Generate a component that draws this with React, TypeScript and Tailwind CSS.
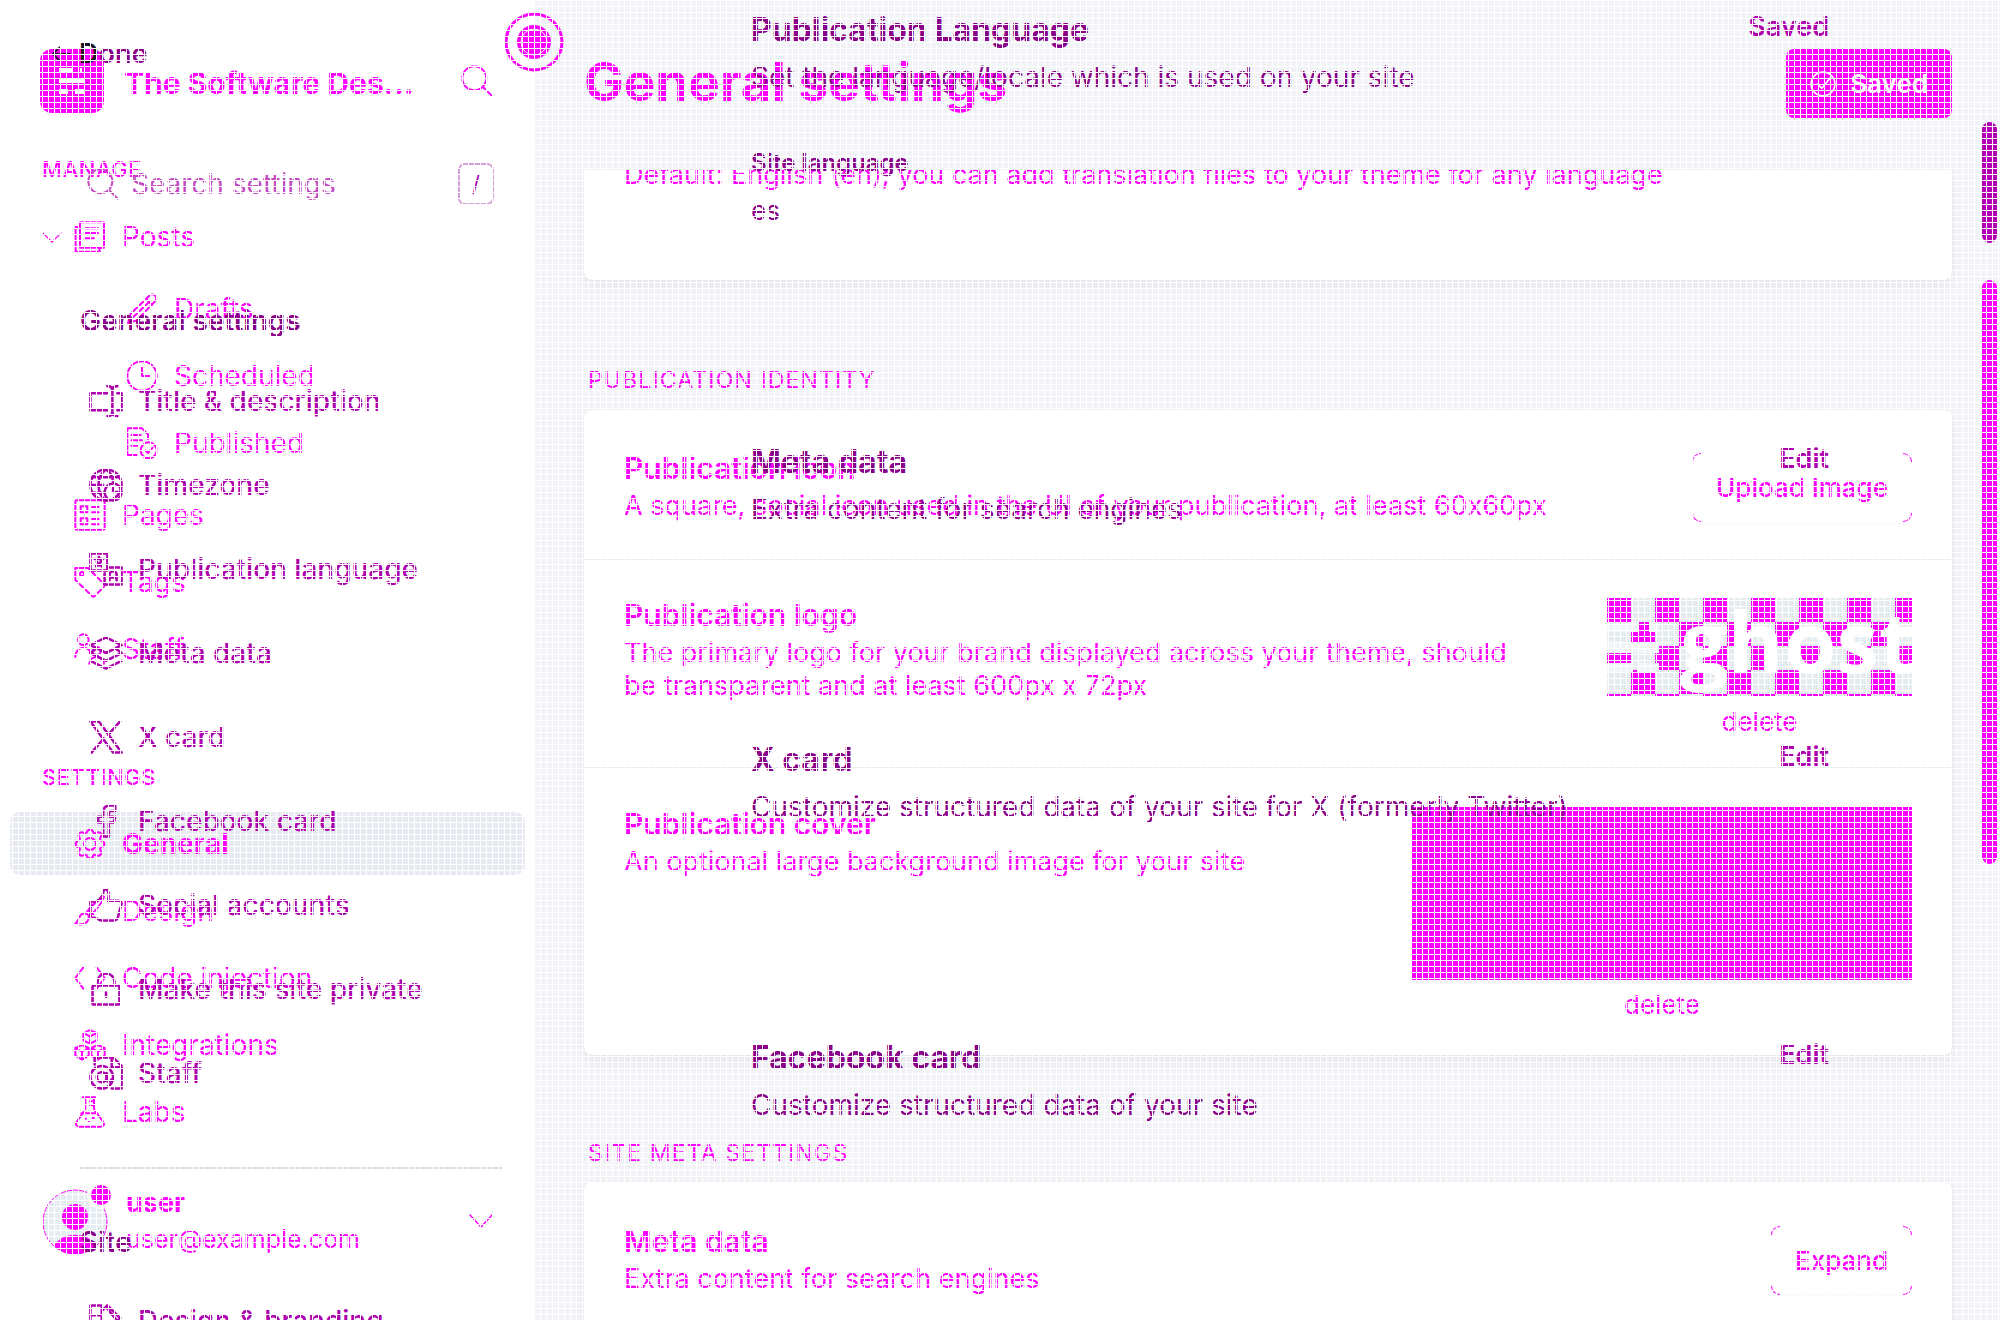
import type { ReactNode } from "react";

const family = "font-['Inter','Liberation_Sans',sans-serif] [font-feature-settings:'calt'_0]";

function Icon({ children, size = "size-8", width = 1.5 }: { children: ReactNode; size?: string; width?: number }) {
  return (
    <svg
      viewBox="0 0 24 24"
      fill="none"
      stroke="currentColor"
      strokeWidth={width}
      strokeLinecap="round"
      strokeLinejoin="round"
      aria-hidden="true"
      className={`${size} shrink-0`}
    >
      {children}
    </svg>
  );
}

const magnifier = (
  <>
    <circle cx="10" cy="10" r="9" />
    <path d="M16.5 16.5 L23 23" />
  </>
);
const posts = (
  <>
    <path d="M4.5 1h18v19h-18z" />
    <path d="M4.5 4.5H1.2V23h18V20M8 5.5h10M8 9h10M8 13h7" />
  </>
);
const pencil = <path d="M1.500 22.500l2-7L17.500 2a2.800 2.800 0 0 1 4.300 4.200L8 20.500zM15 4.500l4.500 4.500M5.500 18L17.500 6.500" />;
const clock = (
  <>
    <circle cx="12" cy="12" r="11" />
    <path d="M12 5v7h6" />
  </>
);
const published = (
  <>
    <path d="M8 21H1V1h11l4.500 4.500V9M4 6h7M4 10h8M4 14h5" />
    <circle cx="17" cy="17.500" r="6" />
    <path d="M14.500 17.500l2 2 3.500-4" />
  </>
);
const pages = (
  <>
    <rect x="1" y="1" width="22" height="22" rx="1" />
    <path d="M5 5.500h5V10H5zM13.500 6h5M13.500 10h5M5 14.500h5V19H5zM13.500 15h5M13.500 19h5" />
  </>
);
const tag = (
  <>
    <path d="M1 1.500h9.500L22.500 13.500a1.500 1.500 0 0 1 0 2L15.500 22.500a1.500 1.500 0 0 1-2 0L1 10.500z" />
    <circle cx="6" cy="6" r="1.500" />
  </>
);
const staff = (
  <>
    <circle cx="7" cy="5" r="4" />
    <path d="M1 18c0-4 2.500-7 6-7s5 2 5.500 4" />
    <circle cx="17" cy="13.500" r="3" />
    <path d="M11.500 23c0-3 2.500-5 5.500-5s5.500 2 5.500 5" />
  </>
);
const gear = (
  <>
    <path d="M9.500 3.500C10 .5 14 .5 14.500 3.500c1 .8 1.500.5 2.500 0 2.500-1 4.500 1.500 3 3.500-.8 1.300-.5 2 .5 2.500 3 .8 3 4.200 0 5-1 .5-1.300 1.200-.5 2.500 1.500 2-.5 4.500-3 3.500-1-.5-1.500-.8-2.500 0-.5 3-4.500 3-5 0-1-.8-1.500-.5-2.500 0-2.500 1-4.500-1.500-3-3.500.8-1.300.5-2-.5-2.500-3-.8-3-4.200 0-5 1-.5 1.300-1.200.5-2.500-1.500-2 .5-4.500 3-3.500 1 .5 1.500.8 2.500 0z" />
    <circle cx="12" cy="12" r="4.500" />
  </>
);
const brush = <path d="M22.500 1.500c-5 2.500-10 7-13.500 12l2.500 2.500C16 12 20.500 7 22.500 1.500zM8.500 14c-5-.5-4 4.500-7.500 7.500 4.500 1.500 10 0 10-5M11 11l3.500 3.500" />;
const code = <path d="M7 4L1 12l6 8M17 4l6 8-6 8" />;
const cubes = (
  <path d="M12 .8l5 2.200v5.500l-5 2.500-5-2.500V3zM7 3l5 2.500L17 3M12 5.500V11M6 12l5 2.200V20l-5 3-5-3v-5.800zM1 14.200L6 17l5-2.800M6 17v6M18 12l5 2.200V20l-5 3-5-3v-5.800zM13 14.200l5 2.800 5-2.800M18 17v6" />
);
const flask = <path d="M6.500 1h9.500M8.500 1v9L2 19.500C.8 21.500 1.800 23 4 23h16c2.200 0 3.200-1.500 2-3.500L15 10V1M12 4h3M12 7h3M5.500 13h12M8 17h1M14 16.500h1M11 19.500h1" />;

const textField = <path d="M13 6.500H1v12h12M20 6.500h3v12h-3M13 1.500c2.500 0 3.500 1 3.500 3v15c0 2-1 3-3.500 3M20 1.500c-2.500 0-3.500 1-3.500 3M20 22.500c-2.500 0-3.500-1-3.500-3" />;
const globe = (
  <>
    <circle cx="12" cy="12" r="11" />
    <path d="M12 23c-7-5-7-17 0-22 3 2 4.500 5 5 8.500M2.500 6.500h19M1 12h9M2.500 17.500h7" />
    <circle cx="17" cy="17" r="6" />
    <path d="M17 14v3h3" />
  </>
);
const language = (
  <>
    <rect x="1" y="1" width="12" height="12" />
    <path d="M4 5h6M7 3.500V5M5 10c2.500-1 3.500-2.500 4-5M5.500 7c1 1.500 2 2.500 3.500 3" />
    <path d="M13 11h10v12H11v-8M14.500 20v-4a2.500 2.500 0 0 1 5 0v4M14.500 18h5" />
  </>
);
const layers = <path d="M12 1l11 5.500L12 12 1 6.500zM1 12l11 5.500L23 12M1 17.500L12 23l11-5.500M5 9l-4 3M19 9l4 3" />;
const xLogo = <path d="M1 1h6l16 22h-6zM22 1L13.500 10.500M1.800 23l8.700-10" />;
const facebook = <path d="M18.500 1H15c-3.500 0-5 2-5 5v3H6.500v4H10v10h4V13h3.500l1-4H14V6.500c0-1 .5-1.500 1.500-1.500h3z" />;
const thumb = <path d="M1 21V9.500h4c3-1 5-4 5.500-8.500 3-.5 4 2 3 8h7.500c2 0 2.500 2 1.500 3.500l-2 8c-.5 2-1.500 2.500-3.500 2.500H9c-2 0-3-2-5-2z" />;
const lock = (
  <>
    <rect x="2.500" y="9.500" width="19" height="13.500" rx="1" />
    <path d="M6 9.500V7a6 6 0 0 1 12 0v2.500M12 14.500v3" />
  </>
);
const atFile = (
  <>
    <path d="M4 6V1h13l6 6v16h-7M16 1v7h7" />
    <circle cx="9" cy="15" r="8" />
    <circle cx="9" cy="15" r="3.500" />
    <path d="M12.500 12v4.500c0 2 3 2 3.500 0" />
  </>
);
const swatch = <path d="M1 1h8v22H1zM1 8h8M1 15h8M9 5l4-4 9 9L9 23M23 15v8H9M12 2l8 10" />;

type Item = { label: string; icon: ReactNode; open?: boolean };

const manageTop: Item[] = [{ label: "Posts", icon: posts, open: true }];
const postViews: Item[] = [
  { label: "Drafts", icon: pencil },
  { label: "Scheduled", icon: clock },
  { label: "Published", icon: published },
];
const manageRest: Item[] = [
  { label: "Pages", icon: pages },
  { label: "Tags", icon: tag },
  { label: "Staff", icon: staff },
];
const settingsItems: Item[] = [
  { label: "Design", icon: brush },
  { label: "Code injection", icon: code },
  { label: "Integrations", icon: cubes },
  { label: "Labs", icon: flask },
];
const generalItems: Item[] = [
  { label: "Title & description", icon: textField },
  { label: "Timezone", icon: globe },
  { label: "Publication language", icon: language },
  { label: "Meta data", icon: layers },
  { label: "X card", icon: xLogo },
  { label: "Facebook card", icon: facebook },
  { label: "Social accounts", icon: thumb },
  { label: "Make this site private", icon: lock },
  { label: "Staff", icon: atFile },
];

function NavLink({ item }: { item: Item }) {
  return (
    <a href="#nav" className="flex h-[67px] items-center pl-[42px]">
      <span className="flex w-8 items-center">
        {item.open && (
          <Icon size="size-5" width={1.5}>
            <path d="M1 7l11 11L23 7" />
          </Icon>
        )}
      </span>
      <Icon>{item.icon}</Icon>
      <span className="ml-4">{item.label}</span>
    </a>
  );
}

function AdminSidebar() {
  return (
    <aside className="relative h-[1320px] w-[535px] shrink-0 bg-white text-[28px] leading-8">
      <div className="flex h-[162px] items-start pr-[42px] pl-10 pt-[49px]">
        <svg viewBox="0 0 64 64" className="size-16 shrink-0" aria-label="Site icon" role="img">
          <rect width="64" height="64" rx="12" fill="currentColor" />
          <path d="M19 19h14v4H19zM40 19h2v4h-2zM19 29h25v5H19zM19 40h9v5h-9zM35 40h9v5h-9z" fill="#fff" />
        </svg>
        <span className="mt-[18px] ml-5 flex-1 truncate text-[30px] font-bold">The Software Des...</span>
        <button aria-label="Search" className="mt-4">
          <Icon>{magnifier}</Icon>
        </button>
      </div>
      <h2 className="-mt-2 mb-[19px] pl-[42px] text-[22px] leading-[30px] font-medium tracking-wide">MANAGE</h2>
      <nav aria-label="Manage">
        {manageTop.map((i) => (
          <NavLink key={i.label} item={i} />
        ))}
        <div className="py-[5px]">
          {postViews.map((i) => (
            <a key={i.label} href="#view" className="flex h-[67px] items-center pl-[126px]">
              <Icon>{i.icon}</Icon>
              <span className="ml-4">{i.label}</span>
            </a>
          ))}
        </div>
        {manageRest.map((i) => (
          <NavLink key={i.label} item={i} />
        ))}
      </nav>
      <h2 className="mt-20 mb-5 pl-[42px] text-[22px] leading-[30px] font-medium tracking-wide">SETTINGS</h2>
      <nav aria-label="Settings">
        <a href="#general" aria-current="page" className="mx-[10px] mb-[2px] flex h-[63px] items-center rounded-[10px] bg-[#e8eaf1] pl-16 font-bold">
          <Icon>{gear}</Icon>
          <span className="ml-4">General</span>
        </a>
        {settingsItems.map((i) => (
          <NavLink key={i.label} item={i} />
        ))}
      </nav>
      <button className="mt-10 flex w-full items-center pr-[42px] pl-[42px] text-left">
        <svg viewBox="0 -4 70 72" className="h-[72px] w-[70px] shrink-0" aria-hidden="true">
          <circle cx="33" cy="33" r="32" fill="#e6edf2" stroke="currentColor" strokeWidth="1" />
          <circle cx="33" cy="28" r="13" fill="currentColor" />
          <path d="M12 57c8-15 34-15 42 0-12 11-30 11-42 0z" fill="currentColor" />
          <circle cx="59" cy="6" r="14" fill="#fff" />
          <circle cx="59" cy="6" r="10" fill="currentColor" />
        </svg>
        <span className="ml-[14px] flex flex-1 flex-col">
          <b className="text-[27px] leading-9">user</b>
          <span className="text-[25px] leading-9">user@example.com</span>
        </span>
        <Icon size="size-6">
          <path d="M1 6l11 12L23 6" />
        </Icon>
      </button>
      <button aria-label="Status" className="absolute top-[12px] -right-[29px] z-10">
        <svg viewBox="0 0 60 60" className="size-[60px]">
          <circle cx="30" cy="30" r="28" fill="none" stroke="currentColor" strokeWidth="3" />
          <circle cx="30" cy="30" r="17" fill="currentColor" />
          <circle cx="30" cy="30" r="13" fill="none" stroke="#fff" />
        </svg>
      </button>
    </aside>
  );
}

function OutlineButton({ children }: { children: string }) {
  return (
    <button className="relative h-[69px] rounded-[9px] px-6 text-[26px] font-medium whitespace-nowrap shadow-[0_2px_3px_rgba(0,0,0,0.03)]">
      <span className="absolute top-0 left-0 size-[9px] rounded-tl-[9px] border-t border-l border-current" />
      <span className="absolute top-0 right-0 size-[9px] rounded-tr-[9px] border-t border-r border-current" />
      <span className="absolute bottom-0 left-0 size-[9px] rounded-bl-[9px] border-b border-l border-current" />
      <span className="absolute right-0 bottom-0 size-[9px] rounded-br-[9px] border-r border-b border-current" />
      {children}
    </button>
  );
}

function Copy({ title, text }: { title: string; text: string }) {
  return (
    <div className="mr-24">
      <h3 className="text-[30px] leading-[34px] font-semibold">{title}</h3>
      <p className="mt-1 text-[27px] leading-[33px]">{text}</p>
    </div>
  );
}

const cardShadow = "shadow-[0_0_1px_rgba(0,0,0,0.15),0_6px_12px_rgba(0,0,0,0.05)]";

function GhostLogo() {
  return (
    <svg viewBox="0 0 305 99" className="h-[99px] w-[305px]" role="img" aria-label="Publication logo">
      <defs>
        <pattern id="checks" width="48" height="48" patternUnits="userSpaceOnUse">
          <rect width="48" height="48" fill="#e5ecf0" />
          <path d="M0 0h24v24H0zM24 24h24v24H24z" fill="#ff00ff" />
        </pattern>
      </defs>
      <rect width="305" height="99" fill="url(#checks)" />
      <path d="M0 24h32v10H0zM42 24h10v10H42zM0 44h52v11H0zM0 65h25v10H0zM30 65h22v10H30z" fill="#f1f5f7" />
      <text x="73" y="75" fill="#fff" fontFamily="'Open Sans', sans-serif" fontWeight="700" fontSize="85">
        ghost
      </text>
    </svg>
  );
}

function AdminMain() {
  return (
    <main className="relative h-[1320px] min-w-0 flex-1 overflow-hidden bg-[#f2f3f7] pr-12 pl-[49px]">
      <header className="flex h-[170px] items-start justify-between pt-[49px]">
        <h1 className="text-[53px] leading-[66px] font-bold">General settings</h1>
        <button className="flex h-[69px] items-center gap-[14px] rounded-lg bg-[#ff00ff] px-6 text-[26px] font-semibold text-white">
          <Icon size="size-[26px]">
            <circle cx="12" cy="12" r="11" />
            <path d="M7 12l4 4 8-10" />
          </Icon>
          Saved
        </button>
      </header>
      <section className={`h-[110px] overflow-hidden rounded-b-lg bg-white px-10 ${cardShadow}`}>
        <p className="-mt-3 text-[27px] leading-[33px]">
          Default: English (en); you can add translation files to your theme for any language
        </p>
      </section>
      <h2 className="mt-[85px] mb-[15px] pl-1 text-[23px] leading-[30px] tracking-wider">PUBLICATION IDENTITY</h2>
      <section className={`divide-y divide-[#e8ebef] rounded-lg bg-white ${cardShadow}`}>
        <div className="flex items-start justify-between px-10 pt-[41px] pb-[37px]">
          <Copy title="Publication icon" text="A square, social icon used in the UI of your publication, at least 60x60px" />
          <div className="pt-[2px]">
            <OutlineButton>Upload Image</OutlineButton>
          </div>
        </div>
        <div className="flex h-[208px] items-start justify-between px-10 pt-[38px]">
          <Copy title="Publication logo" text="The primary logo for your brand displayed across your theme, should be transparent and at least 600px x 72px" />
          <div className="flex shrink-0 flex-col items-center">
            <GhostLogo />
            <button className="mt-2 text-[26px] leading-[33px]">delete</button>
          </div>
        </div>
        <div className="flex h-[287px] items-start justify-between px-10 pt-[39px]">
          <Copy title="Publication cover" text="An optional large background image for your site" />
          <div className="flex shrink-0 flex-col items-center">
            <div role="img" aria-label="Publication cover" className="h-[173px] w-[500px] bg-[#ff00ff]" />
            <button className="mt-2 text-[26px] leading-[33px]">delete</button>
          </div>
        </div>
      </section>
      <h2 className="mt-[83px] mb-[14px] pl-1 text-[23px] leading-[30px] tracking-wider">SITE META SETTINGS</h2>
      <section className={`flex h-[200px] items-start justify-between rounded-lg bg-white px-10 pt-[42px] ${cardShadow}`}>
        <Copy title="Meta data" text="Extra content for search engines" />
        <div className="pt-[2px]">
          <OutlineButton>Expand</OutlineButton>
        </div>
      </section>
      <div className="absolute top-[280px] right-[3px] h-[584px] w-[15px] rounded-full bg-[#ff00ff]" />
    </main>
  );
}

function SettingLink({ item }: { item: Item }) {
  return (
    <a href="#setting" className="flex h-[84px] items-center gap-[15px] pl-[89px]">
      <Icon size="size-[34px]" width={1.8}>{item.icon}</Icon>
      {item.label}
    </a>
  );
}

function Panel({ title, text, action }: { title: string; text: string; action: string }) {
  return (
    <div className="flex items-start justify-between">
      <div>
        <h3 className="text-[32px] leading-[42px] font-bold">{title}</h3>
        <p className="mt-[6px] text-[28px] leading-[40px]">{text}</p>
      </div>
      <button className="text-[27px] leading-9 font-semibold text-[#ae00ae]">{action}</button>
    </div>
  );
}

function SettingsOverlay() {
  return (
    <div className="relative z-10 flex h-[1320px] overflow-hidden text-[#8b008b]">
      <aside className="w-[535px] shrink-0 text-[28px] leading-8 font-medium text-[#ae00ae]">
        <a href="#done" className="mt-[37px] flex h-[34px] items-center pl-[52px] text-[27px] font-semibold text-[#8b008b]">
          <svg viewBox="0 0 20 20" className="mr-[9px] size-[18px] text-[#1c1426]" fill="none" stroke="currentColor" strokeWidth="2" aria-hidden="true">
            <path d="M20 10H1M9 2L1 10l8 8" />
          </svg>
          <span>
            <span className="text-[#1c1426]">D</span>one
          </span>
        </a>
        <div className="mt-[92px] flex h-[42px] items-center pr-[41px] pl-[87px] text-[#c44ac4]">
          <Icon>{magnifier}</Icon>
          <input
            aria-label="Search settings"
            placeholder="Search settings"
            className="ml-3 min-w-0 flex-1 bg-transparent text-[28px] font-normal outline-none placeholder:text-[#c44ac4]"
          />
          <kbd className="flex h-[42px] w-9 items-center justify-center rounded-[7px] border-2 border-[#d5a0d5] font-['Inter'] text-[22px] font-normal text-[#ae00ae]">
            /
          </kbd>
        </div>
        <h2 className="mt-[96px] mb-[18px] h-10 pl-20 leading-10 font-semibold text-[#8b008b]">General settings</h2>
        <nav aria-label="General settings">
          {generalItems.map((i) => (
            <SettingLink key={i.label} item={i} />
          ))}
        </nav>
        <hr className="mt-[52px] mr-[33px] ml-20 border-t-2 border-[#dedede]" />
        <h2 className="mt-[53px] mb-[17px] h-10 pl-20 leading-10 font-semibold text-[#8b008b]">Site</h2>
        <SettingLink item={{ label: "Design & branding", icon: swatch }} />
      </aside>
      <div className="min-w-0 flex-1 pt-[9px] pr-[171px] pl-[216px]">
        <Panel title="Publication Language" text="Set the language/locale which is used on your site" action="Saved" />
        <dl className="mt-[48px] h-[96px]">
          <dt className="text-[24px] leading-9 font-semibold">Site language</dt>
          <dd className="mt-3 text-[26px] leading-9">es</dd>
        </dl>
        <div className="mt-[200px] flex flex-col gap-[210px]">
          <Panel title="Meta data" text="Extra content for search engines" action="Edit" />
          <Panel title="X card" text="Customize structured data of your site for X (formerly Twitter)" action="Edit" />
          <Panel title="Facebook card" text="Customize structured data of your site" action="Edit" />
        </div>
      </div>
      <div className="absolute top-[122px] right-[3px] h-[121px] w-[15px] rounded-full bg-[#b400b4]" />
    </div>
  );
}

export default function App() {
  return (
    <div className={`relative grid overflow-hidden bg-white text-[#ff00ff] ${family}`}>
      <div className="col-start-1 row-start-1 flex min-w-0">
        <AdminSidebar />
        <AdminMain />
      </div>
      <div className="col-start-1 row-start-1 min-w-0">
        <SettingsOverlay />
      </div>
      <div className="pointer-events-none z-20 col-start-1 row-start-1 bg-[linear-gradient(to_right,#fff_1px,transparent_1px),linear-gradient(to_bottom,#fff_1px,transparent_1px)] bg-[size:6px_6px]" />
    </div>
  );
}
